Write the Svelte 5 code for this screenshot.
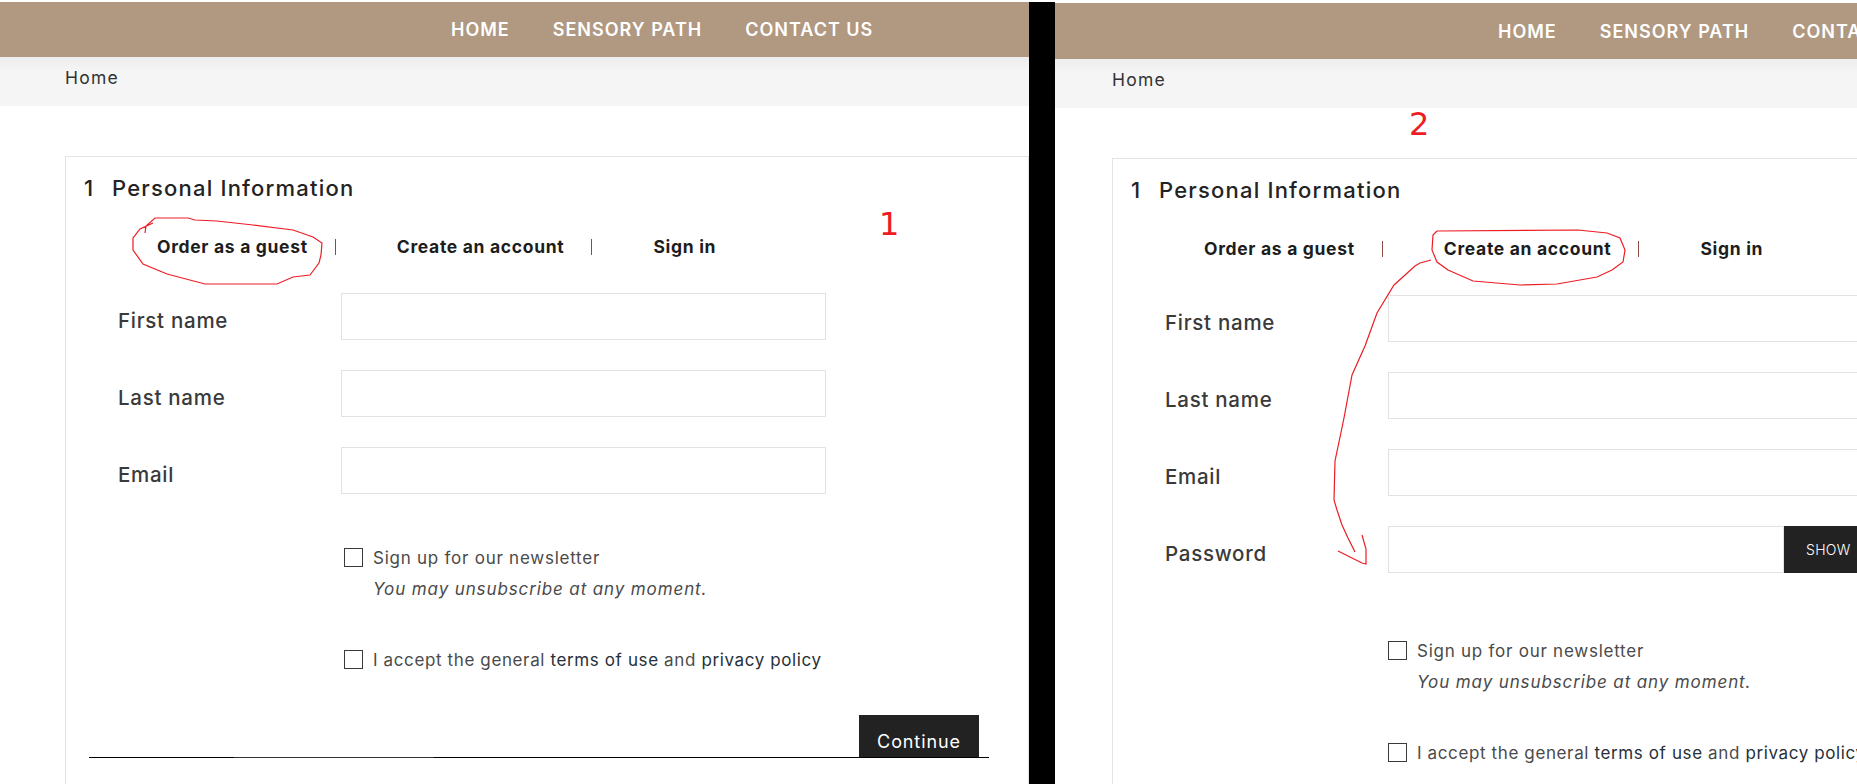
<script lang="ts">
  const navLinks = ["HOME", "SENSORY PATH", "CONTACT US"];
  const tabs = ["Order as a guest", "Create an account", "Sign in"];
  const ring1 =
    "M145 233 L146 226 L155 218 L188 218 L195 220 L217 221 L253 225 L293 230 L313 237 L322 243 L321 255 L319 263 L310 275 L293 277 L277 284 L205 284 L167 274 L143 264 L133 250 L133 238 L140 229 L153 223";
  const ring2 =
    "M1437 231 L1578 230 L1607 233 L1620 238 L1625 250 L1623 262 L1612 270 L1597 277 L1557 284 L1520 285 L1473 281 L1448 270 L1437 262 L1432 250 L1433 235 L1437 231";
  const arrow =
    "M1431 260 L1420 263 L1415 266 L1394 285 L1377 313 L1365 346 L1352 375 L1344 418 L1335 461 L1334 500 L1337 510 L1342 525 L1348 538 L1355 552";
  const arrowHead = "M1362 535 L1366 549 L1366 564 L1362 563 L1350 557 L1338 551";
</script>

{#snippet checkout(fields: string[], variant: string)}
  <div class="panel {variant}">
    <header class="topbar">
      <nav>
        {#each navLinks as link}
          <a href="#top">{link}</a>
        {/each}
      </nav>
    </header>
    <div class="crumbs">Home</div>
    <section class="card">
      <h2><span class="step">1</span>Personal Information</h2>
      <div class="tabs">
        {#each tabs as tab, i}
          {#if i > 0}<span class="sep"></span>{/if}
          <a href="#top">{tab}</a>
        {/each}
      </div>
      <form>
        {#each fields as field}
          <div class="row">
            <label for="{variant}-{field}">{field}</label>
            <div class="control">
              <input id="{variant}-{field}" type="text" />
              {#if field === "Password"}
                <button type="button" class="show">SHOW</button>
              {/if}
            </div>
          </div>
        {/each}
        <div class="checks">
          <div class="check"><span class="box"></span>Sign up for our newsletter</div>
          <em>You may unsubscribe at any moment.</em>
          <div class="check terms">
            <span class="box"></span>
            <span>I accept the general <b>terms of use</b> and <b>privacy policy</b></span>
          </div>
        </div>
        <div class="foot">
          <button type="button" class="next">Continue</button>
        </div>
      </form>
    </section>
  </div>
{/snippet}

<main class="shot">
  {@render checkout(["First name", "Last name", "Email"], "first")}
  <div class="divider"></div>
  {@render checkout(["First name", "Last name", "Email", "Password"], "second")}

  <svg class="ink" width="1857" height="784" viewBox="0 0 1857 784" aria-hidden="true">
    <path d={ring1} />
    <path d={ring2} />
    <path d={arrow} />
    <path d={arrowHead} />
  </svg>
  <span class="mark one">1</span>
  <span class="mark two">2</span>
</main>

<style>
  :global(body) {
    background: #fff;
  }

  .shot {
    position: relative;
    display: flex;
    width: 1857px;
    height: 784px;
    overflow: hidden;
    background: #fff;
    color: #232323;
    font-family: Inter, "Noto Sans", sans-serif;
  }

  .panel {
    --inset: 65px;
    --check-shift: 3px;
    --check-top: 54px;
    width: 1029px;
    flex: none;
    padding-top: 2px;
    box-sizing: border-box;
    overflow: hidden;
  }

  .panel.second {
    --inset: 57px;
    --check-shift: 0px;
    --check-top: 68px;
    width: 802px;
    padding-top: 3px;
  }

  .divider {
    width: 26px;
    flex: none;
    margin-top: 2px;
    background: #000;
  }

  .topbar {
    height: 55px;
    background: #b09881;
  }

  .second .topbar {
    height: 56px;
  }

  nav {
    display: flex;
    gap: 43px;
    align-items: center;
    height: 100%;
    padding-left: calc(var(--inset) + 386px);
    box-sizing: border-box;
    white-space: nowrap;
  }

  nav a {
    color: #fff;
    font-size: 18px;
    font-weight: 600;
    letter-spacing: 1px;
    text-decoration: none;
  }

  .crumbs {
    height: 49px;
    padding: 12px 0 0 var(--inset);
    box-sizing: border-box;
    background: linear-gradient(180deg, #eeeeee 0, #f5f5f5 14px);
    font-size: 17.5px;
    line-height: 18px;
    letter-spacing: 1.25px;
    color: #333;
  }

  .card {
    width: 964px;
    margin: 50px 0 0 var(--inset);
    padding-top: 15px;
    box-sizing: border-box;
    border: 1px solid #e3e3e3;
    border-bottom: 0;
    height: 800px;
  }

  h2 {
    display: flex;
    height: 32px;
    margin: 0;
    padding-left: 18px;
    align-items: center;
    font-size: 22px;
    font-weight: 500;
    letter-spacing: 1.2px;
    color: #232323;
  }

  .step {
    width: 28px;
  }

  .tabs {
    display: flex;
    align-items: center;
    height: 31px;
    margin-top: 27px;
    padding-left: 91px;
    white-space: nowrap;
  }

  .tabs a {
    color: #1d1d1d;
    font-size: 17.5px;
    font-weight: 700;
    letter-spacing: 0.68px;
    text-decoration: none;
  }

  .sep {
    width: 1px;
    height: 16px;
    margin: 0 61px 0 27px;
    background: #8b4a42;
  }

  form {
    margin-top: 31px;
  }

  .row {
    display: flex;
    height: 47px;
    margin-bottom: 30px;
    padding-left: 52px;
    align-items: center;
  }

  label {
    width: 223px;
    flex: none;
    padding-top: 8px;
    font-size: 20.5px;
    font-weight: 500;
    letter-spacing: 0.72px;
    color: #3a3a3a;
  }

  .control {
    display: flex;
    width: 485px;
    height: 47px;
    flex: none;
  }

  input {
    flex: 1;
    min-width: 0;
    height: 47px;
    margin: 0;
    padding: 0;
    box-sizing: border-box;
    border: 1px solid #e2e2e2;
    background: #fff;
  }

  .show {
    width: 89px;
    flex: none;
    border: 0;
    background: #222;
    color: #fff;
    font-family: inherit;
    font-size: 14px;
    font-weight: 300;
    letter-spacing: 0.3px;
    padding: 0 0 0 2px;
    text-align: left;
    text-indent: 20px;
  }

  .checks {
    margin-top: var(--check-top);
    padding-left: calc(275px + var(--check-shift));
    color: #4a4a4a;
    font-size: 17px;
    letter-spacing: 0.75px;
  }

  .check {
    display: flex;
    height: 19px;
    align-items: center;
    gap: 10px;
    white-space: nowrap;
  }

  .terms {
    letter-spacing: 0.62px;
  }

  .box {
    width: 19px;
    height: 19px;
    flex: none;
    box-sizing: border-box;
    border: 1px solid #3a3a3a;
  }

  em {
    display: block;
    margin: 12px 0 51px 29px;
    line-height: 20px;
    letter-spacing: 0.88px;
    white-space: nowrap;
  }

  b {
    font-weight: 400;
    color: #26303a;
  }

  .foot {
    display: flex;
    justify-content: flex-end;
    width: 900px;
    margin: 46px 0 0 23px;
    padding-right: 10px;
    padding-bottom: 1px;
    box-sizing: border-box;
    background:
      linear-gradient(90deg, #000 145px, #333 145px, #333 345px, #000 345px) bottom / 100% 1px no-repeat;
  }

  .next {
    width: 120px;
    height: 42px;
    padding: 10px 0 0;
    border: 0;
    background: #222;
    color: #fff;
    font-family: inherit;
    font-size: 18px;
    letter-spacing: 0.9px;
  }

  .ink {
    position: absolute;
    left: 0;
    top: 0;
    pointer-events: none;
  }

  .ink path {
    fill: none;
    stroke: #ed1c24;
    stroke-width: 1.2;
  }

  .mark {
    position: absolute;
    color: #ed1c24;
    font-family: "DejaVu Sans", sans-serif;
    font-size: 32px;
    line-height: 33px;
  }

  .one {
    left: 879px;
    top: 208px;
  }

  .two {
    left: 1409px;
    top: 108px;
  }
</style>
